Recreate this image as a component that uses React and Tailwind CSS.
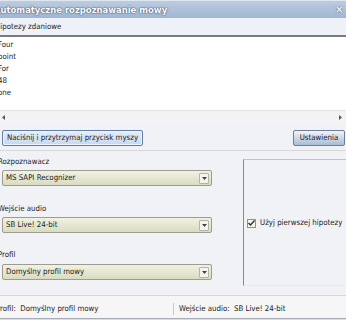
const hypotheses = ['Four', 'point', 'For', '48', 'one']

function Combo({ value }) {
  return (
    <div className="flex h-[16px] w-[210px] items-center rounded-[2px] border border-[#9c9c94] bg-gradient-to-b from-[#f1f2e2] to-[#d9dcc0] pl-[3px] pr-[2px]">
      <span className="flex-1 truncate">{value}</span>
      <span className="flex h-[11px] w-[10px] items-center justify-center rounded-[1px] border border-[#b4b4aa] bg-[#f4f4ee]">
        <svg width="5" height="3" viewBox="0 0 5 3"><path d="M0 0h5L2.5 3z" fill="#444" /></svg>
      </span>
    </div>
  )
}

export default function App() {
  return (
    <div
      className="h-[320px] w-[346px] overflow-hidden bg-[#f1f2f5] text-[7.8px] leading-[12px] text-[#1b1b1b]"
      style={{ fontFamily: '"DejaVu Sans Condensed", "Liberation Sans", Arial, sans-serif' }}
    >
      <div className="-ml-[6px] w-[358px]">
        <div className="flex h-[18px] items-center border-t border-[#dfe6f0] bg-gradient-to-b from-[#bccbe0] to-[#9fb6d4] pr-[9px]">
          <span className="flex-1 text-[9.4px] font-bold text-white [text-shadow:0_0_2px_#3a4d66,0_0_1px_#3a4d66]">
            Automatyczne rozpoznawanie mowy
          </span>
          <span className="text-[10px] text-white [text-shadow:0_0_2px_#3a4d66]">✕</span>
        </div>

        <div className="flex h-[19px] items-center border-b-2 border-[#7a7a7a] bg-[#eef1f7] pl-[1px]">Hipotezy zdaniowe</div>
        <div className="h-[73px] bg-white pl-[4px] pt-[2px]">
          {hypotheses.map(h => (
            <div key={h} className="h-[12px]">{h}</div>
          ))}
        </div>
        <div className="flex h-[13px] items-center justify-between border-t border-[#e2e2e2] bg-[#f3f3f3] pl-[8px] pr-[10px]">
          <svg width="3" height="5" viewBox="0 0 3 5"><path d="M3 0v5L0 2.5z" fill="#555" /></svg>
          <svg width="3" height="5" viewBox="0 0 3 5"><path d="M0 0v5l3-2.5z" fill="#555" /></svg>
        </div>

        <div className="flex items-center justify-between pl-[8px] pr-[7px] pt-[7px]">
          <button className="h-[16px] w-[141px] whitespace-nowrap rounded-[2px] border border-[#5f7fa8] bg-gradient-to-b from-[#e6eef8] to-[#c7d8ee] shadow-[inset_0_0_0_1px_#eef4fb]">
            Naciśnij i przytrzymaj przycisk myszy
          </button>
          <button className="h-[16px] w-[52px] whitespace-nowrap rounded-[2px] border border-[#6d7f99] bg-gradient-to-b from-[#f2f4f8] to-[#a9bcd6]">
            Ustawienia
          </button>
        </div>
        <div className="mt-[4px] border-t border-[#d6d8dc]" />

        <div className="flex">
          <div className="flex w-[249px] shrink-0 flex-col pl-[4px] pt-[5px]">
            <div className="h-[12px]">Rozpoznawacz</div>
            <div className="ml-[4px] mt-[2px]"><Combo value="MS SAPI Recognizer" /></div>
            <div className="mt-[17px] h-[12px]">Wejście audio</div>
            <div className="ml-[4px] mt-[2px]"><Combo value="SB Live! 24-bit" /></div>
            <div className="mt-[16px] h-[12px]">Profil</div>
            <div className="ml-[4px] mt-[3px]"><Combo value="Domyślny profil mowy" /></div>
          </div>
          <div className="mt-[8px] h-[127px] flex-1 border border-l-[#8a8a8a] border-t-[#c4c4c4] border-r-[#c4c4c4] border-b-[#e8e8e8] pl-[3px] pt-[57px]">
            <label className="flex items-center gap-[4px]">
              <span className="flex h-[9px] w-[9px] shrink-0 items-center justify-center border border-[#8f8f8f] bg-[#f4f4ea]">
                <svg width="7" height="6" viewBox="0 0 7 6"><path d="M0.5 3l2 2 4-4.5" stroke="#2a2a2a" strokeWidth="1.3" fill="none" /></svg>
              </span>
              <span className="whitespace-nowrap">Użyj pierwszej hipotezy</span>
            </label>
          </div>
        </div>

        <div className="mt-[9px] flex h-[23px] items-center border-t border-[#d4d6da] bg-[#f6f6f7] pt-[3px]">
          <div className="w-[180px] whitespace-nowrap border-r border-[#c8c8c8] pl-[2px]">Profil:&nbsp; Domyślny profil mowy</div>
          <div className="whitespace-nowrap pl-[5px]">Wejście audio:&nbsp; SB Live! 24-bit</div>
        </div>
        <div className="h-[10px] border-t border-[#a6adb8] bg-gradient-to-b from-[#d9dee6] to-[#c2c9d4]" />
      </div>
    </div>
  )
}
